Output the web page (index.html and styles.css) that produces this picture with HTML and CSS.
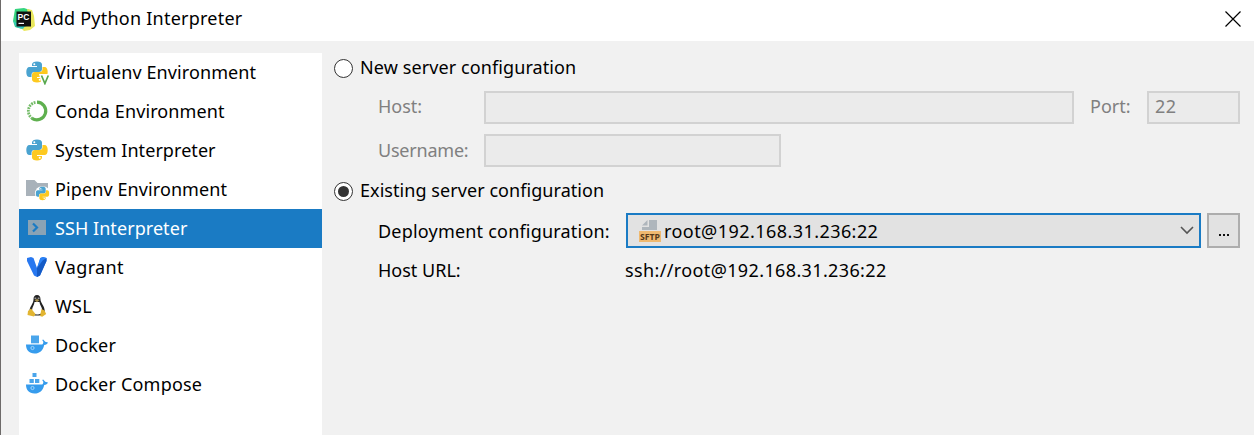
FILE: index.html
```html
<!DOCTYPE html>
<html lang="en">
<head>
<meta charset="utf-8">
<title>Add Python Interpreter</title>
<link rel="stylesheet" href="styles.css">
</head>
<body>
<svg class="defs" width="0" height="0" aria-hidden="true">
  <symbol id="python" viewBox="0 0 22 22">
    <path fill="#4aa3d0" d="M6 3.500C6 1.500 8 .5 11 .5s5 1 5 3V8c0 2-1.200 3-3 3H8.500C6.500 11 5.500 12.300 5.500 14v2H3.500C1.300 16 .3 14 .3 11s1-5 3.200-5H11V5H6z"/>
    <path fill="#fdc91f" d="M16 18.500c0 2-2 3-5 3s-5-1-5-3V14c0-2 1.200-3 3-3h4.500c2 0 3-1.300 3-3V6h2c2.200 0 3.200 2 3.200 5s-1 5-3.200 5H11v1h5z"/>
    <circle cx="8.300" cy="3.200" r="1" fill="#fff"/><circle cx="13.700" cy="18.800" r="1" fill="#fff"/>
  </symbol>
  <symbol id="whale" viewBox="0 0 22 22">
    <path fill="#369ced" d="M0 10.500h16.200c.9-.6 1.200-1.600 1.100-2.800L16.200 6l1-.6 2 2.400 2.800.6c-.6 1.700-1.900 2.400-3.800 2.500C17 16.500 13.500 19.500 8.500 19.500 3 19.500 0 16 0 10.500z"/>
    <circle cx="6.500" cy="14" r="1.600" fill="none" stroke="#b9e0fb" stroke-width=".8"/>
  </symbol>
</svg>
<div class="dialog">
  <header class="titlebar">
    <svg class="app-icon" viewBox="0 0 24 24">
      <path fill="#35d47f" d="M3 2 12 1l6 2v16l-8 3-7-2L1 14z"/>
      <path fill="#e9e75c" d="m15 2 5 1 2 6 1 10-5 4-6 1-3-3 9-3z"/>
      <path fill="#35c9c4" d="m1 13 3 7 7 2 2-3-9-3z"/>
      <path fill="#111" d="M4.500 4.500h14.500v15H4.500z"/>
      <text class="app-letters" x="5.600" y="12.600">PC</text>
      <path fill="#fff" d="M6.500 15.800h5.500v1.200H6.500z"/>
    </svg>
    <h1 class="title">Add Python Interpreter</h1>
    <svg class="close" viewBox="0 0 16 16"><path d="m.5.5 15 15m0-15-15 15" stroke="#000" stroke-width="1.200"/></svg>
  </header>
  <div class="body">
    <nav class="sidebar">
      <div class="item"><svg class="icon" viewBox="0 0 24 24"><use href="#python" width="22" height="22"/><path d="M13 13H24V24H16z" fill="#fff"/><path d="m15.500 14.500 3.400 8 3.400-8" fill="none" stroke="#58a84e" stroke-width="1.700"/></svg><span class="t-venv">Virtualenv Environment</span></div>
      <div class="item"><svg class="icon" viewBox="0 0 24 24"><path d="M11 2.200A8.800 8.800 0 1 1 6 18.300" fill="none" stroke="#5fb04f" stroke-width="3.200"/><path d="M6.500 18.500A8.800 8.800 0 0 1 10 2.300" fill="none" stroke="#74bb68" stroke-width="2.800" stroke-dasharray="1.800 .9"/></svg><span class="t-venv">Conda Environment</span></div>
      <div class="item"><svg class="icon" viewBox="0 0 24 24"><use href="#python" width="22" height="22"/></svg><span class="t-system">System Interpreter</span></div>
      <div class="item"><svg class="icon" viewBox="0 0 24 24"><path fill="#a9b2ba" d="M0 2h8.500l3 3H22v13H0z"/><circle cx="16.500" cy="15.500" r="7.600" fill="#fff"/><path fill="#a9b2ba" d="M8 5h14v3.500H11z"/><use href="#python" x="9.500" y="8" width="14" height="15"/></svg><span class="t-venv">Pipenv Environment</span></div>
      <div class="item selected"><svg class="icon" viewBox="0 0 24 24"><path fill="#8aa3b5" d="M2 3h18v15H2z"/><path d="m7 6.500 4 4-4 4" fill="none" stroke="#1a7bc4" stroke-width="2.200"/></svg><span class="t-system">SSH Interpreter</span></div>
      <div class="item"><svg class="icon" viewBox="0 0 24 24"><path fill="#2878f0" d="m1 2 4-1 2.500 1L11 12l3.300-10L17 1l3.500 1v3L14 19.500 11 21l-3-1.500L1 5z"/><path fill="#155bc6" d="m11 12 4-7 5.500-3v3L14 19.500 11 21z"/><path fill="#2a82f6" d="m14.300 2 2.700-1 3.500 1-3.500 2-6 8z"/></svg><span class="t-vagrant">Vagrant</span></div>
      <div class="item"><svg class="icon" viewBox="0 0 24 24"><path fill="#222" d="M7.500 4.500C7.500 1.500 8.700 0 11 0s3.500 1.500 3.500 4.500c0 3.500 4.200 6.500 4.200 11.500 0 2.500-2 4.500-7.700 4.500S3.500 18 3.500 15.500C3.500 12 7.500 8.500 7.500 4.500z"/><path fill="#fff" d="M8.500 7h5c0 3 2.700 5 2.700 8.500 0 3-2 4-5.200 4s-5-1.500-5-4C6 12 8.500 10 8.500 7z"/><path fill="#a99350" d="m8.500 5 2.500-1 2.500 1-2.500 2.200z"/><path fill="#e2b531" d="m5 13.500 4.500 5.500-1.500 2.500L1.500 20 2 16zM15.500 14l3 1.500 1.700 3.500-4 2.800-2.200-.8z"/><path fill="#999" d="M8.500 2.500h1.800V4H8.500zm3.200 0h1.800V4h-1.800z"/></svg><span class="t-vagrant">WSL</span></div>
      <div class="item"><svg class="icon" viewBox="0 0 24 24"><path fill="#4aa5eb" d="M5 1.500h8v7.800H5z"/><use href="#whale" width="22" height="22"/></svg><span class="t-docker">Docker</span></div>
      <div class="item"><svg class="icon" viewBox="0 0 24 24"><path fill="#4aa5eb" d="M6.500 0h4v4h-4zM3.500 6h4.300v4H3.500zM9 6h4.300v4H9z"/><use href="#whale" y="1" width="22" height="22"/></svg><span class="t-docker">Docker Compose</span></div>
    </nav>
    <main class="form">
      <div class="radio-row"><span class="radio"></span><span class="t-new">New server configuration</span></div>
      <div class="row disabled host-row">
        <span class="label">Host:</span><div class="field host"></div>
        <span class="port-label">Port:</span><div class="field port"><span class="t-22">22</span></div>
      </div>
      <div class="row disabled user-row"><span class="label t-user">Username:</span><div class="field user"></div></div>
      <div class="radio-row existing"><span class="radio checked"></span><span class="t-existing">Existing server configuration</span></div>
      <div class="row deploy-row">
        <span class="label deploy t-deploy">Deployment configuration:</span>
        <div class="combo">
          <svg class="sftp" viewBox="0 0 24 24"><path fill="#afb6bc" d="M11 1h8v10H4V8h7z"/><path fill="#afb6bc" d="M9.500 1v5.500H4z"/><path fill="#efb970" d="M1 12h22v11H1z"/><text class="sftp-text" x="2" y="21.200" textLength="20" lengthAdjust="spacingAndGlyphs">SFTP</text></svg>
          <span class="t-root">root@192.168.31.236:22</span>
          <svg class="chevron" viewBox="0 0 14 9"><path d="m1 1 6 6 6-6" fill="none" stroke="#555" stroke-width="1.600"/></svg>
        </div>
        <div class="more"><i></i><i></i><i></i></div>
      </div>
      <div class="row url-row"><span class="label deploy">Host URL:</span><span class="t-ssh-url">ssh://root@192.168.31.236:22</span></div>
    </main>
  </div>
</div>
</body>
</html>
```
FILE: styles.css
```css
* { box-sizing: border-box; }
body { margin: 0; background: #f1f1f1; color: #000; font: 18px/26px "Noto Sans", "Open Sans", sans-serif; white-space: nowrap; overflow: hidden; }
svg { display: block; flex: none; }
.defs { position: absolute; }
.dialog { height: 435px; border-left: 1px solid #6d6a69; display: flex; flex-direction: column; }
.titlebar { height: 41px; flex: none; background: #fff; display: flex; align-items: center; padding: 0 13px 4px 11px; }
.app-icon { width: 24px; height: 24px; }
.app-letters { font: bold 8.500px "Liberation Sans", sans-serif; fill: #fff; }
.title { margin: 0 0 0 5px; padding-bottom: 2px; font-size: 18px; font-weight: 400; line-height: 26px; letter-spacing: .23px; }
.close { width: 16px; height: 16px; margin-left: auto; }
.body { flex: 1; display: flex; padding: 12px 0 0 18px; }
.sidebar { width: 303px; background: #fff; }
.item { height: 39px; display: flex; align-items: center; gap: 5px; padding-left: 7px; }
.item span { padding-bottom: 2px; }
.icon { width: 24px; height: 24px; }
.selected { background: #1a7bc4; color: #fff; }
.form { padding-left: 12px; }
.radio-row { height: 30px; display: flex; align-items: center; gap: 7px; }
.radio-row span + span { padding-bottom: 2px; }
.radio { width: 19px; height: 19px; border: 1.500px solid #333; border-radius: 50%; background: #fff; display: flex; align-items: center; justify-content: center; }
.checked::after { content: ""; width: 11px; height: 11px; border-radius: 50%; background: #333; }
.existing { margin-top: 9px; }
.row { display: flex; align-items: center; padding-left: 44px; }
.disabled { color: #808080; }
.label { width: 106px; flex: none; padding-bottom: 2px; }
.field { height: 33px; border: 2px solid #d2d2d2; background: #ebebeb; }
.host-row { margin-top: 7px; height: 34px; }
.host { width: 590px; }
.port-label { width: 57px; margin-left: 16px; padding-bottom: 2px; }
.port { width: 93px; padding-left: 6px; display: flex; align-items: center; }
.user-row { margin-top: 10px; height: 33px; }
.user { width: 297px; }
.deploy-row { margin-top: 7px; height: 35px; }
.deploy { width: 248px; }
.deploy-row .label { padding-bottom: 0; }
.combo { width: 575px; height: 35px; border: 2px solid #1a7bc4; background: #e2e2e2; display: flex; align-items: center; padding: 0 5px 0 10px; }
.sftp { width: 24px; height: 24px; margin-right: 2px; }
.sftp-text { font: bold 9px "Noto Sans", sans-serif; fill: #54391a; }
.chevron { width: 14px; height: 9px; margin-left: auto; }
.more { width: 33px; height: 35px; margin-left: 6px; border: 2px solid #adadad; background: #e2e2e2; display: flex; justify-content: center; gap: 2px; padding-top: 19px; }
.more i { width: 2px; height: 2px; background: #111; }
.url-row { margin-top: 9px; height: 28px; }
.url-row .deploy { width: 247px; }

/* Label tracking */
.t-venv, .t-new { letter-spacing: .1px; }
.t-system, .t-existing { letter-spacing: .06px; }
.t-vagrant { letter-spacing: .35px; }
.t-docker { letter-spacing: .2px; }
.t-22 { letter-spacing: .4px; padding-bottom: 2px; }
.t-user { letter-spacing: -.22px; }
.t-deploy { letter-spacing: .2px; }
.t-root { letter-spacing: .44px; }
.t-ssh-url { letter-spacing: .37px; padding-bottom: 2px; }
```
